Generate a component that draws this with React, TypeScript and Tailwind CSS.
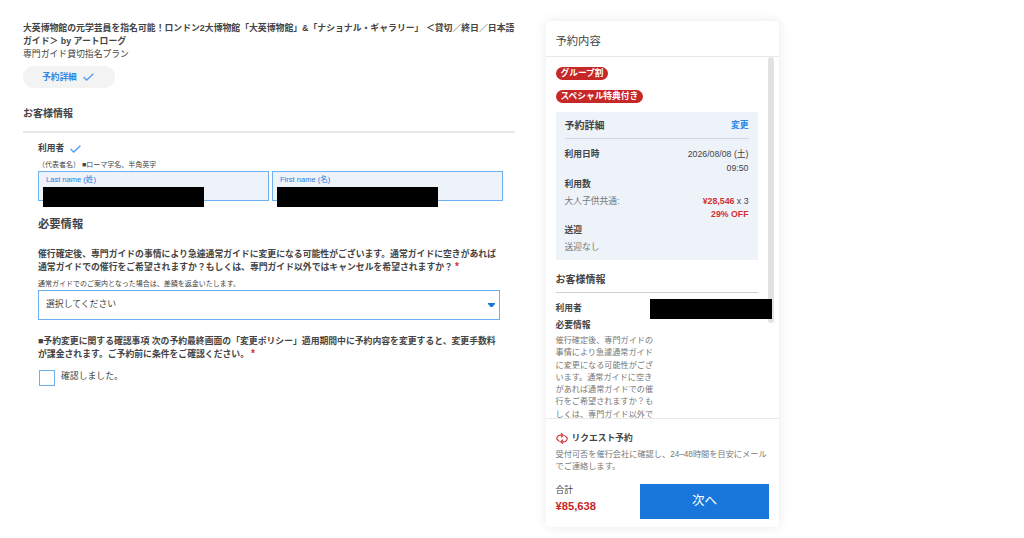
import clsx from 'clsx'

const Check = () => <svg width={11} height={8} viewBox="0 0 11 8" fill="none">
  <path d="M0.6 4 L3.7 7 L10.4 0.7" stroke="#4a9df0" strokeWidth={1.3} />
</svg>

const RequestIcon = () => <svg width={12} height={11} viewBox="0 0 12 11" fill="none" stroke="#cf3a3a" strokeWidth={1.2}>
  <path d="M3.6 8.6 L0.9 6.2 C0.5 4 2 2.3 4.2 2.2 H7" />
  <path d="M5 0.2 L7.2 2.2 L5 4.4" />
  <path d="M8.4 2.4 L11.1 4.8 C11.5 7 10 8.7 7.8 8.8 H5" />
  <path d="M7 6.6 L4.8 8.8 L7 10.8" />
</svg>

const Required = () => <span className="ml-0.5 text-[10px] leading-none text-[#e02b2b]">*</span>

const NameField = ({ label }: { label: string }) => {
  return <div className="relative h-[30px] w-[231px] border border-[#6db1f3] bg-[#eef3fa] pl-[7px] pt-[3px]">
    <div className="text-[7.55px] leading-[10px] text-[#1f80e0]">{label}</div>
    <div className="absolute left-1 top-[15px] h-5 w-[161px] bg-black" />
  </div>
}

const Badge = ({ text, className }: { text: string, className?: string }) => {
  return <div className={clsx('h-[13px] w-fit whitespace-nowrap rounded-full bg-[#c62828] px-[5px] text-[8.7px] font-bold leading-[13px] text-white', className)}>
    {text}
  </div>
}

const policy = [
  '催行確定後、専門ガイドの',
  '事情により急遽通常ガイド',
  'に変更になる可能性がござ',
  'います。通常ガイドに空き',
  'があれば通常ガイドでの催',
  '行をご希望されますか？も',
  'しくは、専門ガイド以外で',
]

const BookingForm = () => {
  return <main className="w-[492px] shrink-0 whitespace-nowrap pt-[22px] text-[8.83px] leading-[13px]">
    <h1 className="text-[8.86px] font-bold">
      大英博物館の元学芸員を指名可能！ロンドン2大博物館「大英博物館」&amp;「ナショナル・ギャラリー」 ＜貸切／終日／日本語<br />
      ガイド＞ by アートローグ
    </h1>
    <p>専門ガイド貸切指名プラン</p>
    <button className="mt-[5px] flex h-[22px] w-[92px] items-center gap-[6px] rounded-full bg-[#f3f3f3] pl-[19px] text-[8.7px] font-bold text-[#2b8ae6]">
      予約詳細
      <Check />
    </button>
    <h2 className="mt-[19px] text-[10px] font-bold leading-[14px]">お客様情報</h2>
    <div className="mt-[10px] h-[2px] bg-[#e8e8e8]" />
    <div className="pl-[15px]">
      <div className="mt-[9px] flex items-center gap-[6px] text-[8.7px] font-bold">
        利用者
        <Check />
      </div>
      <p className="mt-1 text-[7px] leading-[12px]">（代表者名） ■ローマ字名、半角英字</p>
      <div className="flex gap-[3px]">
        <NameField label="Last name (姓)" />
        <NameField label="First name (名)" />
      </div>
      <h2 className="mt-[15px] text-[11.3px] font-bold leading-4">必要情報</h2>
      <p className="mt-4 font-bold">
        催行確定後、専門ガイドの事情により急遽通常ガイドに変更になる可能性がございます。通常ガイドに空きがあれば<br />
        通常ガイドでの催行をご希望されますか？もしくは、専門ガイド以外ではキャンセルを希望されますか？<Required />
      </p>
      <p className="mt-1 text-[7px] leading-[12px]">通常ガイドでのご案内となった場合は、差額を返金いたします。</p>
      <div className="flex h-[30px] w-[462px] items-center justify-between border border-[#6db1f3] pb-px pl-[7px] pr-1">
        選択してください
        <svg width={7} height={4} viewBox="0 0 7 4">
          <path d="M0 0 H7 V1 L4.4 4 H2.6 L0 1 Z" fill="#1976d9" />
        </svg>
      </div>
      <p className="mt-[15px] font-bold">
        ■予約変更に関する確認事項 次の予約最終画面の「変更ポリシー」適用期間中に予約内容を変更すると、変更手数料<br />
        が課金されます。ご予約前に条件をご確認ください。<Required />
      </p>
      <label className="mt-[9px] flex gap-[6px] pl-px">
        <span className="h-4 w-4 border border-[#6db1f3]" />
        確認しました。
      </label>
    </div>
  </main>
}

const Details = () => {
  return <section className="mt-[9px] h-[148px] w-[202px] bg-[#eef3fa] px-[9px] pt-[6px]">
    <div className="flex items-center justify-between border-b border-[#d3d6da] pb-[5px] font-bold leading-[15px]">
      <h3 className="text-[10px]">予約詳細</h3>
      <a className="text-[#2b8ae6]">変更</a>
    </div>
    <div className="mt-[9px] flex justify-between">
      <b>利用日時</b>
      <div className="text-right">2026/08/08 (土)<br />09:50</div>
    </div>
    <b className="mt-[3px] block">利用数</b>
    <div className="mt-[3px] flex justify-between">
      <span className="text-[#777]">大人子供共通:</span>
      <div className="text-right">
        <span className="font-bold text-[#d32f2f]">¥28,546</span> x 3
        <div className="font-bold text-[#d32f2f]">29% OFF</div>
      </div>
    </div>
    <b className="mt-[2.5px] block">送迎</b>
    <div className="mt-[3px] text-[#777]">送迎なし</div>
  </section>
}

const Summary = () => {
  return <aside className="mt-[21px] h-[506px] w-[233.5px] shrink-0 whitespace-nowrap rounded-sm bg-white text-[8.75px] leading-[13.5px] shadow-[0_0_12px_rgba(0,0,0,0.09)]">
    <h2 className="h-9 border-b border-[#e9e9e9] pl-[10px] pt-3 text-[11.3px] leading-4">予約内容</h2>
    <div className="relative h-[362px] overflow-hidden border-b border-[#e9e9e9] pl-[10px] pt-[10px]">
      <Badge text="グループ割" />
      <Badge text="スペシャル特典付き" className="mt-[10px]" />
      <Details />
      <div className="w-[202px]">
        <h3 className="mt-3 border-b border-[#cfcfcf] pb-[5px] text-[10px] font-bold leading-[15px]">お客様情報</h3>
        <b className="mt-[9px] block">利用者</b>
        <b className="mt-[3px] block">必要情報</b>
        <p className="mt-[3px] text-[8.15px] leading-[12.25px] text-[#777]">
          {policy.map(line => <span key={line} className="block">{line}</span>)}
        </p>
      </div>
      <div className="absolute right-[5px] top-0 h-[266px] w-[6px] rounded-full bg-[#e2e2e2]" />
      <div className="absolute right-[7px] top-[242px] h-5 w-[122px] bg-black" />
    </div>
    <footer className="px-[10px] pt-[13px]">
      <div className="flex items-center gap-1 font-bold">
        <RequestIcon />
        リクエスト予約
      </div>
      <p className="mt-[3px] text-[8.2px] leading-[12px] text-[#777]">
        受付可否を催行会社に確認し、24–48時間を目安にメール<br />
        でご連絡します。
      </p>
      <div className="mt-[11px] flex justify-between">
        <div>
          <div className="leading-[12px]">合計</div>
          <div className="mt-[3px] text-[11.2px] font-bold leading-[14px] text-[#c62828]">¥85,638</div>
        </div>
        <button className="h-[35px] w-[129px] bg-[#1976db] pt-px text-[12.5px] text-white">次へ</button>
      </div>
    </footer>
  </aside>
}

const App = () => {
  return <div className="flex h-[538px] w-[1024px] gap-[30.5px] overflow-hidden bg-white pl-[23px] font-['Liberation_Sans','Noto_Sans_CJK_JP',sans-serif] text-[#444]">
    <BookingForm />
    <Summary />
  </div>
}

export default App
